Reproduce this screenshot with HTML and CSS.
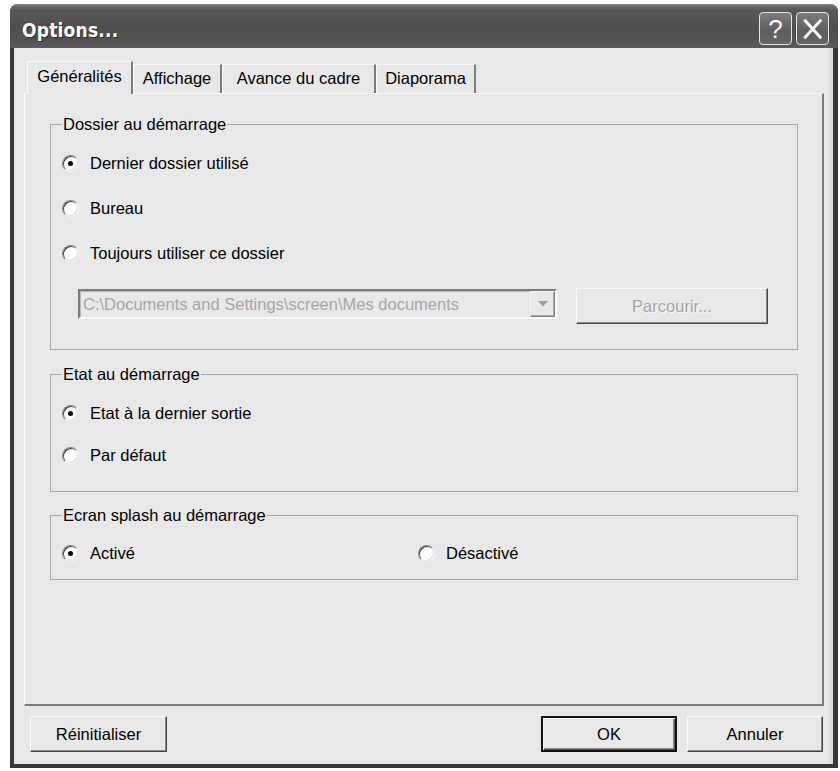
FILE: index.html
```html
<!DOCTYPE html>
<html lang="fr">
<head>
<meta charset="utf-8">
<title>Options...</title>
<link rel="stylesheet" href="styles.css">
</head>
<body>
<div class="window">
  <div class="titlebar">
    <span class="title">Options...</span>
    <div class="title-buttons">
      <span class="tbtn help">?</span>
      <span class="tbtn close"><svg width="32" height="32" viewBox="0 0 32 32"><path d="M8.5 7.5 L24 24.5 M24 7.5 L8.5 24.5" stroke="#fff" stroke-width="3" stroke-linecap="square" fill="none"/></svg></span>
    </div>
  </div>
  <div class="content">
    <div class="tabs">
      <div class="tab selected t1">Généralités</div>
      <div class="tab t2">Affichage</div>
      <div class="tab t3">Avance du cadre</div>
      <div class="tab t4">Diaporama</div>
    </div>
    <div class="panel">
      <fieldset class="group g1">
        <legend>Dossier au démarrage</legend>
        <div class="opt-list list1">
          <div class="opt"><span class="radio checked"></span>Dernier dossier utilisé</div>
          <div class="opt"><span class="radio"></span>Bureau</div>
          <div class="opt"><span class="radio"></span>Toujours utiliser ce dossier</div>
        </div>
        <div class="path-row">
          <div class="combo">
            <span class="combo-text">C:\Documents and Settings\screen\Mes documents</span>
            <span class="combo-btn"><svg width="10" height="6" viewBox="0 0 10 6"><path d="M0 0 H10 L5 5.5 Z" fill="#9c9c9c"/></svg></span>
          </div>
          <div class="btn disabled browse">Parcourir...</div>
        </div>
      </fieldset>
      <fieldset class="group g2">
        <legend>Etat au démarrage</legend>
        <div class="opt-list list2">
          <div class="opt"><span class="radio checked"></span>Etat à la dernier sortie</div>
          <div class="opt"><span class="radio"></span>Par défaut</div>
        </div>
      </fieldset>
      <fieldset class="group g3">
        <legend>Ecran splash au démarrage</legend>
        <div class="opt-grid">
          <div class="opt"><span class="radio checked"></span>Activé</div>
          <div class="opt"><span class="radio"></span>Désactivé</div>
        </div>
      </fieldset>
    </div>
    <div class="actions">
      <div class="btn reset">Réinitialiser</div>
      <div class="spacer"></div>
      <div class="btn default">OK</div>
      <div class="btn cancel">Annuler</div>
    </div>
  </div>
</div>
</body>
</html>
```

FILE: styles.css
```css
html, body {
  margin: 0;
  padding: 0;
  background: #ffffff;
}

body {
  font-family: "Liberation Sans", Arial, sans-serif;
  font-size: 16.5px;
  color: #000;
}

.window {
  box-sizing: border-box;
  width: 828px;
  height: 764px;
  margin: 4px 0 0 10px;
  display: flex;
  flex-direction: column;
  background: #383838;
  border-radius: 8px 8px 0 0;
  overflow: hidden;
}

/* ---------- title bar ---------- */
.titlebar {
  flex: 0 0 44px;
  display: flex;
  align-items: flex-start;
  box-sizing: border-box;
  padding: 8px 9px 0 12px;
  background: linear-gradient(to bottom, #8a8a8a 0px, #6c6c6c 2px, #585858 6px, #4f4f4f 22px, #525252 36px, #5c5c5c 44px);
}

.title {
  font-family: "DejaVu Sans Condensed", "DejaVu Sans", sans-serif;
  font-stretch: condensed;
  font-weight: bold;
  font-size: 19px;
  line-height: 32px;
  padding-top: 2px;
  color: #fff;
  letter-spacing: 0.2px;
  text-shadow: 1px 1px 0 #2a2a2a;
}

.title-buttons {
  margin-left: auto;
  display: flex;
  gap: 4px;
}

.tbtn {
  box-sizing: border-box;
  width: 33px;
  height: 33px;
  border: 1.5px solid #e4e4e4;
  border-radius: 4px;
  background: linear-gradient(to bottom, #7c7c7c, #5e5e5e 60%, #666666);
  display: flex;
  align-items: center;
  justify-content: center;
  color: #fff;
}

.help {
  font-family: "Liberation Sans", Arial, sans-serif;
  font-size: 26px;
  line-height: 30px;
}

.close svg {
  display: block;
}

/* ---------- content ---------- */
.content {
  flex: 1;
  margin: 0 5px 4px 4px;
  background: #e8e8e8;
  display: flex;
  flex-direction: column;
  padding: 13px 9px 12px 10px;
  box-shadow: inset -4px 0 0 #dcdcdc;
}

/* ---------- tabs ---------- */
.tabs {
  display: flex;
  align-items: flex-end;
  height: 32px;
  padding-left: 3px;
  position: relative;
  z-index: 1;
}

.tab {
  box-sizing: border-box;
  height: 29px;
  line-height: 27px;
  border-top: 1px solid #fbfbfb;
  border-left: 1px solid #fbfbfb;
  border-right: 2px solid #7c7c7c;
  text-align: center;
  background: #e8e8e8;
  white-space: nowrap;
}

.tab.selected {
  height: 33px;
  margin-bottom: -1px;
  line-height: 29px;
  padding-bottom: 3px;
}

.t1 { width: 106px; }
.t2 { width: 89px; }
.t3 { width: 154px; }
.t4 { width: 100px; }

/* ---------- panel ---------- */
.panel {
  flex: 0 0 613px;
  box-sizing: border-box;
  border-top: 1px solid #fbfbfb;
  border-left: 1px solid #fbfbfb;
  border-right: 2px solid #7c7c7c;
  border-bottom: 2px solid #7c7c7c;
  padding: 21px 24px 0 25px;
}

.group {
  margin: 0;
  min-width: 0;
  border: 1px solid #a6a6a6;
  box-sizing: border-box;
}

.group legend {
  padding: 0 1px;
  line-height: 18px;
}

.g1 { padding: 18px 0 25px 11px; }
.g2 { padding: 18px 0 24px 11px; margin-top: 15px; }
.g3 { padding: 17px 0 14px 11px; margin-top: 14px; }

.opt-list {
  display: flex;
  flex-direction: column;
}

.list1 { gap: 21px; }
.list2 { gap: 18px; }

.opt-grid {
  display: grid;
  grid-template-columns: 356px auto;
}

.opt {
  display: flex;
  align-items: center;
  height: 24px;
  gap: 11px;
  white-space: nowrap;
}

/* classic radio */
.radio {
  position: relative;
  box-sizing: border-box;
  flex: 0 0 17px;
  width: 17px;
  height: 17px;
  border-radius: 50%;
  background: #ffffff;
  border: 1.5px solid;
  border-color: #8a8a8a #f4f4f4 #f4f4f4 #8a8a8a;
  box-shadow: inset 1px 1px 0 #3c3c3c, inset -1px -1px 0 #dadada;
}

.radio.checked::after {
  content: "";
  position: absolute;
  left: 50%;
  top: 50%;
  width: 5px;
  height: 5px;
  margin: -2.5px 0 0 -2.5px;
  border-radius: 50%;
  background: #000;
}

/* path row */
.path-row {
  display: flex;
  align-items: flex-start;
  margin-top: 23px;
  padding-left: 16px;
}

.combo {
  box-sizing: border-box;
  width: 479px;
  height: 30px;
  margin-top: 1px;
  display: flex;
  align-items: center;
  border: 2px solid;
  border-color: #7c7c7c #fbfbfb #fbfbfb #7c7c7c;
  box-shadow: inset 1px 1px 0 #b8b8b8;
  background: #e8e8e8;
}

.combo-text {
  flex: 1;
  padding-left: 3px;
  color: #a6a6a6;
  white-space: nowrap;
  overflow: hidden;
}

.combo-btn {
  box-sizing: border-box;
  width: 25px;
  height: 26px;
  margin-right: 0;
  display: flex;
  align-items: center;
  justify-content: center;
  background: #e8e8e8;
  border: 1px solid;
  border-color: #f6f6f6 #7c7c7c #7c7c7c #f6f6f6;
  box-shadow: inset -1px -1px 0 #a8a8a8;
}

.combo-btn svg {
  display: block;
}

/* ---------- buttons ---------- */
.btn {
  box-sizing: border-box;
  height: 36px;
  display: flex;
  align-items: center;
  justify-content: center;
  background: #e8e8e8;
  border: 1px solid;
  border-color: #fbfbfb #454545 #454545 #fbfbfb;
  box-shadow: inset -1px -1px 0 #8a8a8a;
  white-space: nowrap;
}

.btn.disabled {
  color: #a4a4a4;
  text-shadow: 1px 1px 0 #fafafa;
}

.browse {
  width: 192px;
  margin-left: 19px;
}

.actions {
  display: flex;
  margin-top: 10px;
  padding: 0 1px 0 6px;
  gap: 10px;
}

.spacer {
  flex: 1;
}

.reset { width: 137px; }
.cancel { width: 136px; }

.btn.default {
  width: 136px;
  border: 2px solid #111;
  box-shadow: inset 1px 1px 0 #fbfbfb, inset -1px -1px 0 #555, inset -2px -2px 0 #8a8a8a;
}
```
